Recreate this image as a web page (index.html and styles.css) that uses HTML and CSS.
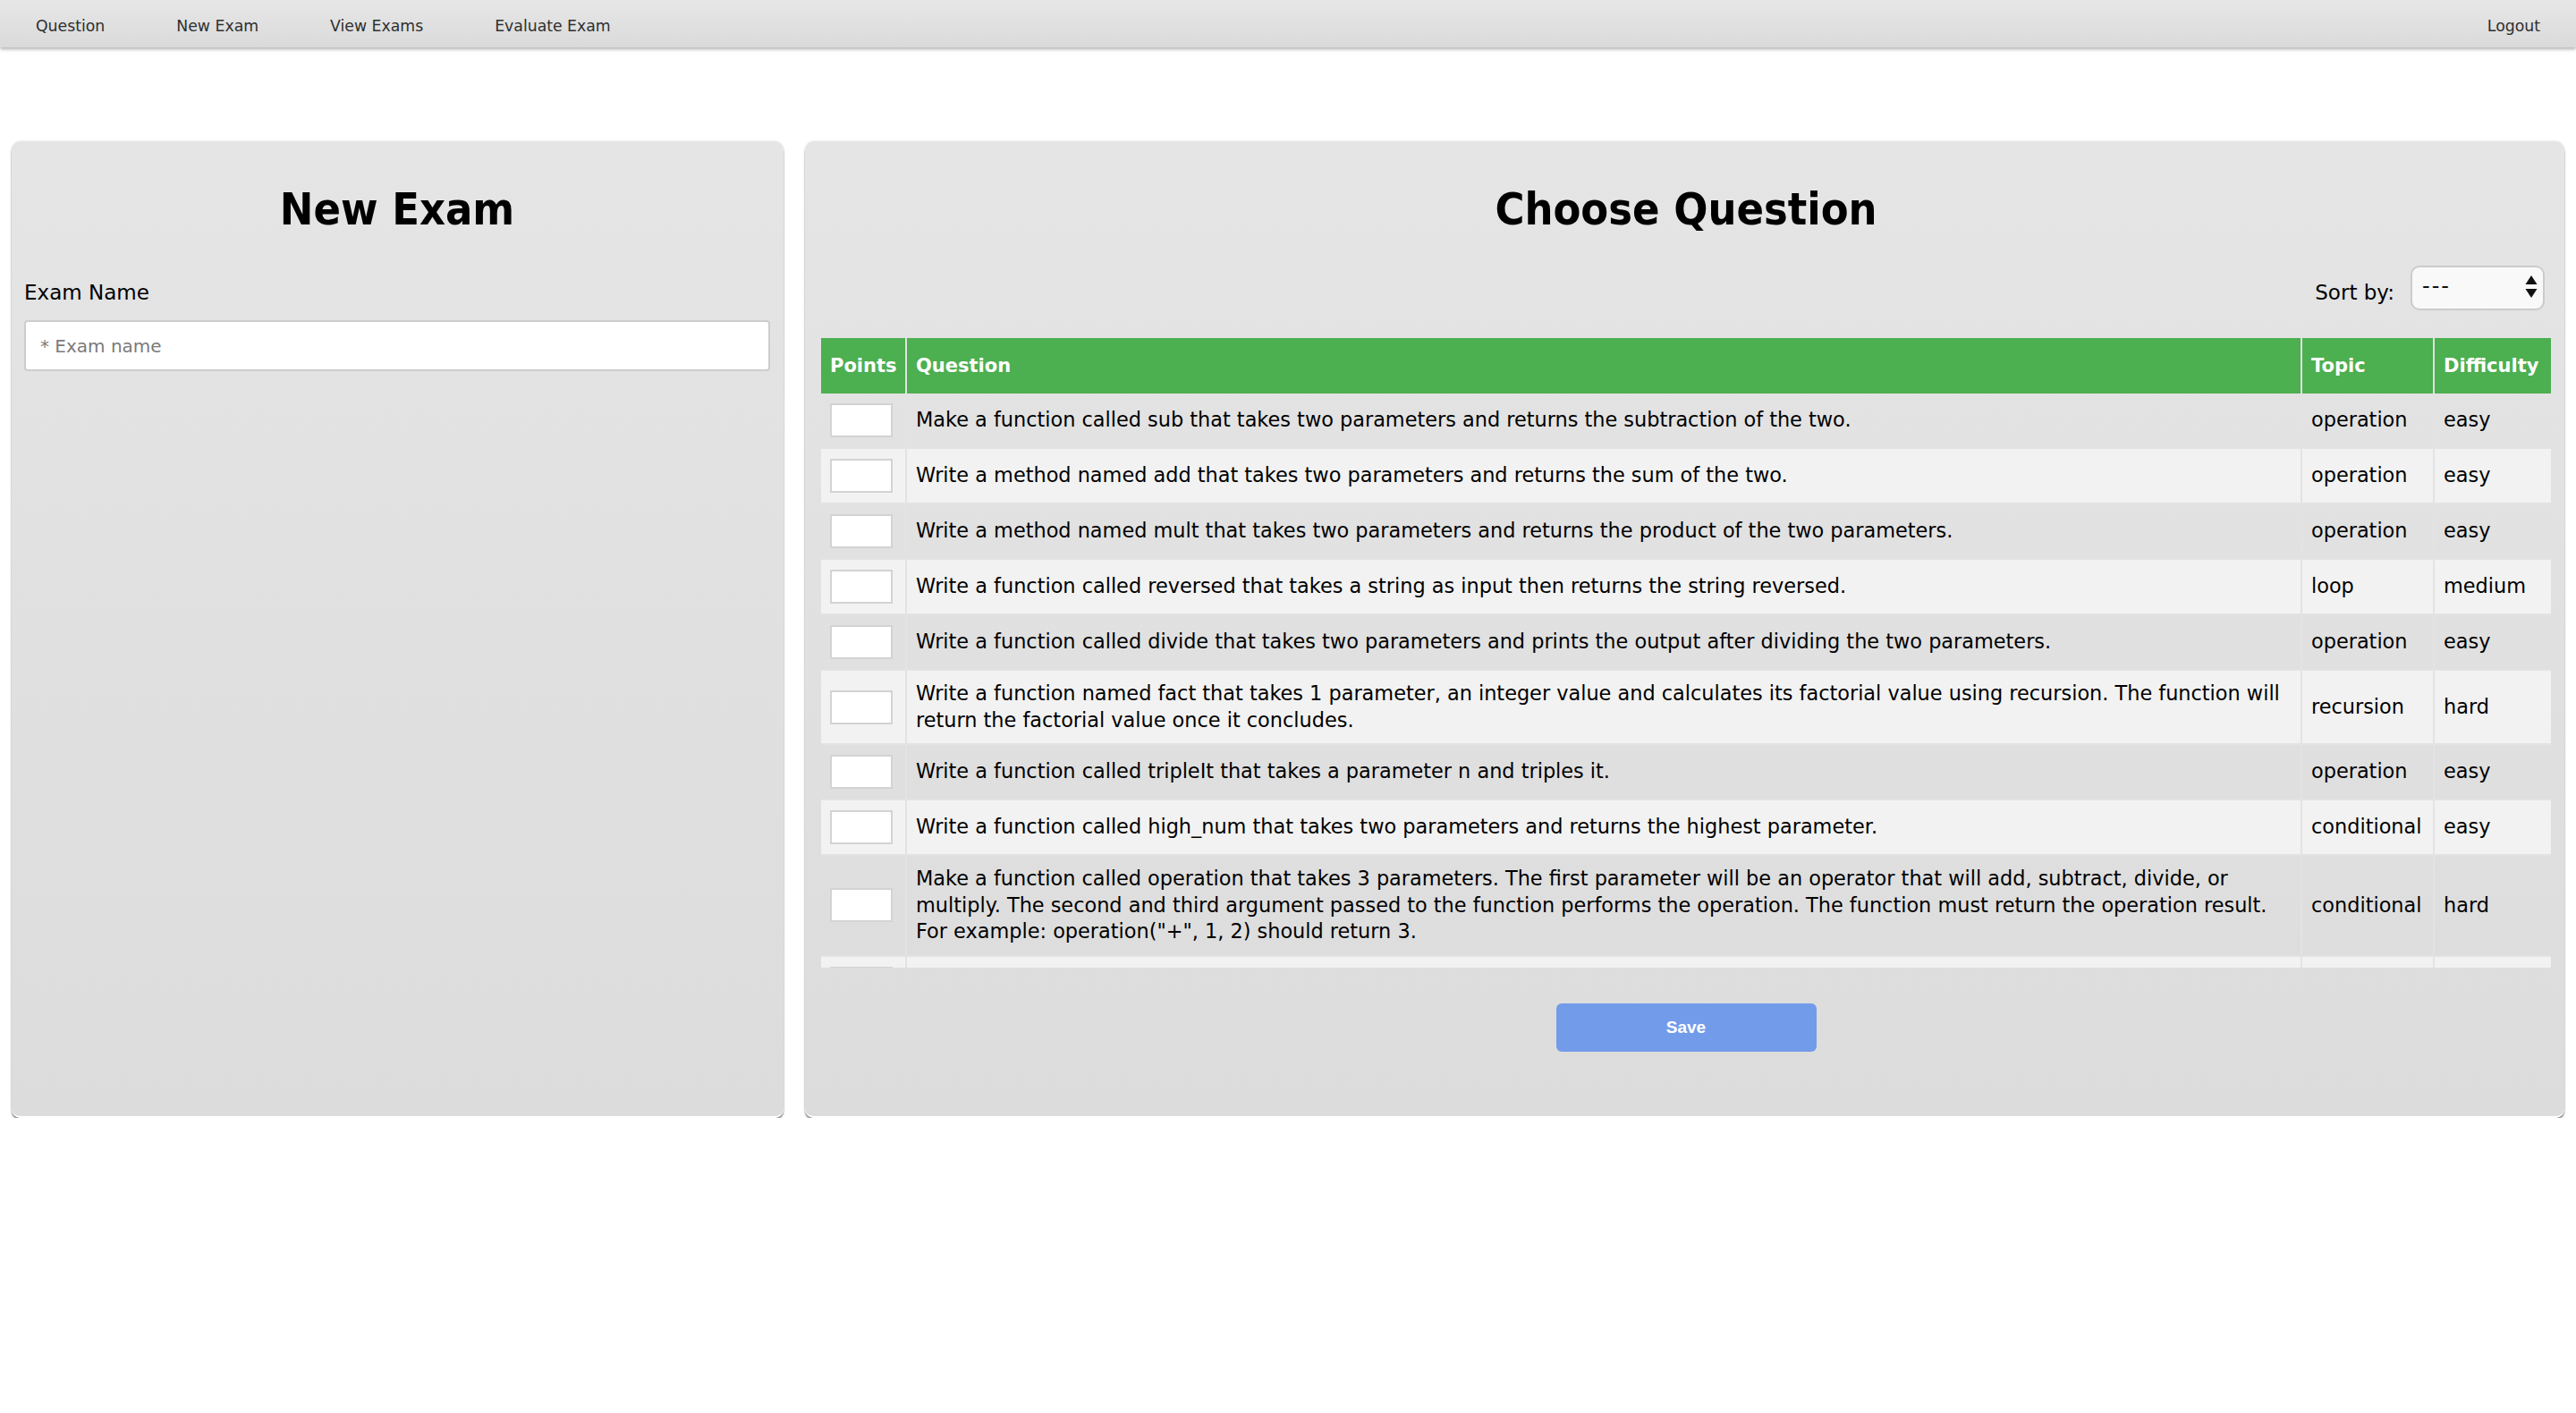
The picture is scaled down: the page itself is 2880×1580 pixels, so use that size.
FILE: index.html
```html
<!DOCTYPE html>
<html lang="en">
<head>
<meta charset="utf-8">
<title>New Exam</title>
<link rel="stylesheet" href="styles.css">
</head>
<body>
<nav class="topnav">
  <a class="nav-link" href="#">Question</a>
  <a class="nav-link" href="#">New Exam</a>
  <a class="nav-link" href="#">View Exams</a>
  <a class="nav-link" href="#">Evaluate Exam</a>
  <a class="nav-link nav-right" href="#">Logout</a>
</nav>

<main class="layout">
  <section class="panel panel-left">
    <h2 class="panel-title">New Exam</h2>
    <label class="field-label" for="examName">Exam Name</label>
    <input class="text-input" id="examName" type="text" placeholder="* Exam name">
  </section>

  <section class="panel panel-right">
    <h2 class="panel-title">Choose Question</h2>
    <div class="sort-row">
      <span class="sort-label">Sort by:</span>
      <div class="select-wrap">
        <select class="sort-select">
          <option>---</option>
          <option>Topic</option>
          <option>Difficulty</option>
        </select>
        <svg class="select-arrows" width="14" height="26" viewBox="0 0 14 26">
          <path d="M7 0 L13.5 10 L0.5 10 Z" fill="#111"/>
          <path d="M0.5 15 L13.5 15 L7 25 Z" fill="#111"/>
        </svg>
      </div>
    </div>

    <div class="table-wrap">
      <table class="q-table">
        <colgroup>
          <col class="col-points">
          <col>
          <col class="col-topic">
          <col class="col-diff">
        </colgroup>
        <thead>
          <tr>
            <th>Points</th>
            <th>Question</th>
            <th>Topic</th>
            <th>Difficulty</th>
          </tr>
        </thead>
        <tbody>
          <tr>
            <td><input class="pts" type="text"></td>
            <td>Make a function called sub that takes two parameters and returns the subtraction of the two.</td>
            <td>operation</td>
            <td>easy</td>
          </tr>
          <tr>
            <td><input class="pts" type="text"></td>
            <td>Write a method named add that takes two parameters and returns the sum of the two.</td>
            <td>operation</td>
            <td>easy</td>
          </tr>
          <tr>
            <td><input class="pts" type="text"></td>
            <td>Write a method named mult that takes two parameters and returns the product of the two parameters.</td>
            <td>operation</td>
            <td>easy</td>
          </tr>
          <tr>
            <td><input class="pts" type="text"></td>
            <td>Write a function called reversed that takes a string as input then returns the string reversed.</td>
            <td>loop</td>
            <td>medium</td>
          </tr>
          <tr>
            <td><input class="pts" type="text"></td>
            <td>Write a function called divide that takes two parameters and prints the output after dividing the two parameters.</td>
            <td>operation</td>
            <td>easy</td>
          </tr>
          <tr>
            <td><input class="pts" type="text"></td>
            <td>Write a function named fact that takes 1 parameter, an integer value and calculates its factorial value using recursion. The function will return the factorial value once it concludes.</td>
            <td>recursion</td>
            <td>hard</td>
          </tr>
          <tr>
            <td><input class="pts" type="text"></td>
            <td>Write a function called tripleIt that takes a parameter n and triples it.</td>
            <td>operation</td>
            <td>easy</td>
          </tr>
          <tr>
            <td><input class="pts" type="text"></td>
            <td>Write a function called high_num that takes two parameters and returns the highest parameter.</td>
            <td>conditional</td>
            <td>easy</td>
          </tr>
          <tr>
            <td><input class="pts" type="text"></td>
            <td>Make a function called operation that takes 3 parameters. The first parameter will be an operator that will add, subtract, divide, or multiply. The second and third argument passed to the function performs the operation. The function must return the operation result. For example: operation("+", 1, 2) should return 3.</td>
            <td>conditional</td>
            <td>hard</td>
          </tr>
          <tr class="row-partial">
            <td><input class="pts" type="text"></td>
            <td></td>
            <td></td>
            <td></td>
          </tr>
        </tbody>
      </table>
    </div>

    <button class="save-btn" type="button">Save</button>
  </section>
</main>
</body>
</html>
```

FILE: styles.css
```css
html, body {
  margin: 0;
  padding: 0;
  background: #ffffff;
}

body {
  font-family: "DejaVu Sans", "Verdana", sans-serif;
  color: #000;
}

/* ---------- top navigation ---------- */
.topnav {
  display: flex;
  align-items: center;
  height: 53px;
  background: linear-gradient(#e7e7e7, #dadada);
  box-shadow: 0 2px 4px rgba(0, 0, 0, 0.32);
  position: relative;
  z-index: 2;
}

.nav-link {
  padding: 6px 40px 0 40px;
  font-size: 17.3px;
  line-height: 47px;
  color: #2f2f2f;
  text-decoration: none;
}

.nav-right {
  margin-left: auto;
}

/* ---------- main layout ---------- */
.layout {
  display: flex;
  gap: 24px;
  padding: 105px 13px 0 13px;
  align-items: stretch;
}

.panel {
  background: linear-gradient(#e5e5e5, #dcdcdc);
  border-radius: 10px;
  border-bottom: 2px solid #ffffff;
  box-shadow: 0 0 2px rgba(0, 0, 0, 0.22), 0 3px 2px rgba(0, 0, 0, 0.4);
  box-sizing: border-box;
}

.panel-left {
  flex: 0 0 863px;
  padding: 48px 15px 0 14px;
}

.panel-right {
  flex: 1 1 auto;
  min-width: 0;
  padding: 48px 15px 72px 18px;
  display: flex;
  flex-direction: column;
}

.panel-title {
  margin: 0;
  text-align: center;
  font-family: "DejaVu Sans Condensed", "DejaVu Sans", sans-serif;
  font-weight: bold;
  font-size: 50px;
  line-height: 56px;
  color: #000;
}

/* ---------- left form ---------- */
.field-label {
  display: block;
  margin-top: 50px;
  font-size: 23px;
  line-height: 30px;
}

.text-input {
  display: block;
  box-sizing: border-box;
  width: 100%;
  height: 57px;
  margin-top: 16px;
  padding: 0 16px;
  border: 2px solid #cdcdcd;
  border-radius: 4px;
  background: #ffffff;
  font-family: "DejaVu Sans", sans-serif;
  font-size: 20px;
  color: #222;
  outline: none;
}

.text-input::placeholder {
  color: #7a7a7a;
}

/* ---------- sort row ---------- */
.sort-row {
  display: flex;
  justify-content: flex-end;
  align-items: center;
  gap: 18px;
  margin-top: 35px;
  padding-right: 7px;
  height: 50px;
}

.sort-label {
  font-size: 23px;
  line-height: 30px;
  padding-top: 9px;
}

.select-wrap {
  position: relative;
  width: 150px;
  height: 50px;
}

.sort-select {
  -webkit-appearance: none;
  appearance: none;
  box-sizing: border-box;
  width: 150px;
  height: 50px;
  padding: 0 0 4px 11px;
  border: 2px solid #cbcbcb;
  border-radius: 10px;
  background: #f9f9f9;
  font-family: "DejaVu Sans", sans-serif;
  font-size: 24px;
  letter-spacing: 2px;
  color: #111;
  outline: none;
}

.select-arrows {
  position: absolute;
  right: 8px;
  top: 11px;
  pointer-events: none;
}

/* ---------- table ---------- */
.table-wrap {
  margin-top: 31px;
  height: 704px;
  overflow-y: auto;
  scrollbar-width: none;
}

.table-wrap::-webkit-scrollbar {
  display: none;
}

.q-table {
  width: 100%;
  border-collapse: collapse;
  table-layout: fixed;
}

.col-points { width: 95px; }
.col-topic { width: 148px; }
.col-diff { width: 131px; }

.q-table th {
  background: #4caf50;
  color: #ffffff;
  font-weight: bold;
  font-size: 21px;
  line-height: 28px;
  text-align: left;
  padding: 17px 10px;
  border-left: 2px solid #e3e3e3;
}

.q-table td {
  font-size: 22.4px;
  line-height: 29.5px;
  padding: 11px 10px;
  vertical-align: middle;
  border-left: 2px solid #e3e3e3;
  border-top: 2px solid #e3e3e3;
}

.q-table th:first-child,
.q-table td:first-child {
  border-left: none;
}

.q-table tbody tr:first-child td {
  border-top: none;
}

.q-table tbody tr:nth-child(even) {
  background: #f2f2f2;
}

.pts {
  display: block;
  box-sizing: border-box;
  width: 70px;
  height: 38px;
  margin: 0;
  border: 2px solid #d3d3d3;
  background: #ffffff;
  font-size: 20px;
  outline: none;
}

/* ---------- save button ---------- */
.save-btn {
  display: block;
  margin: 40px auto 0 auto;
  width: 291px;
  height: 54px;
  border: none;
  border-radius: 6px;
  background: #729bea;
  color: #ffffff;
  font-family: "Liberation Sans", Arial, sans-serif;
  font-weight: bold;
  font-size: 19px;
  cursor: pointer;
}
```
